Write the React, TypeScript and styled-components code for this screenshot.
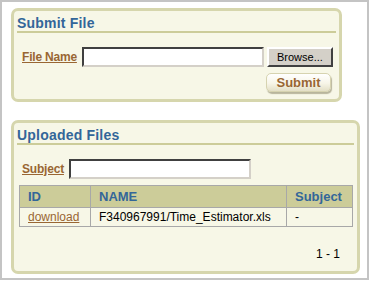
import React from "react";
import styled, { createGlobalStyle } from "styled-components";

const GlobalStyle = createGlobalStyle`
  html, body {
    margin: 0;
    padding: 0;
    background: #ffffff;
  }
  body {
    font-family: "Liberation Sans", Arial, sans-serif;
    font-size: 12px;
    color: #000000;
  }
`;

const Frame = styled.div`
  box-sizing: border-box;
  width: 369px;
  height: 280px;
  border: 2px solid #c4c4c4;
  background: #ffffff;
  padding: 6px 0 0 9px;
  display: flex;
  flex-direction: column;
  gap: 18px;
`;

const Region = styled.div<{ $width: number }>`
  box-sizing: border-box;
  width: ${({ $width }) => $width}px;
  border: 3px solid #d6d6ad;
  border-radius: 7px;
  background: #f7f7e7;
  padding-top: 4px;
  display: flex;
  flex-direction: column;
`;

const RegionTitle = styled.h2`
  margin: 0 3px;
  height: 16px;
  line-height: 16px;
  font-size: 14px;
  font-weight: bold;
  letter-spacing: 0.2px;
  color: #336699;
  border-bottom: 2px solid #cccc99;
`;

const FormBody = styled.div`
  padding: 14px 7px 7px 8px;
  display: flex;
  flex-direction: column;
  align-items: flex-end;
  gap: 6px;
`;

const FieldRow = styled.div`
  display: flex;
  align-items: center;
  align-self: stretch;
  height: 20px;
`;

const Label = styled.a`
  flex-shrink: 0;
  white-space: nowrap;
  font-weight: bold;
  font-size: 12px;
  letter-spacing: -0.2px;
  color: #996633;
  text-decoration: underline;
  margin-right: 5px;
  cursor: pointer;
`;

const TextInput = styled.input`
  box-sizing: border-box;
  flex-shrink: 0;
  width: 182px;
  height: 20px;
  margin: 0;
  padding: 1px 3px;
  border: 2px solid;
  border-color: #404040 #d4d0c8 #d4d0c8 #404040;
  background: #ffffff;
  font-family: "Liberation Sans", Arial, sans-serif;
  font-size: 12px;
`;

const BrowseButton = styled.button`
  box-sizing: border-box;
  flex-shrink: 0;
  width: 66px;
  height: 20px;
  margin-left: 3px;
  padding: 0;
  background: #d4d0c8;
  border: 2px solid;
  border-color: #ffffff #404040 #404040 #ffffff;
  font-family: "Liberation Sans", Arial, sans-serif;
  font-size: 11px;
  color: #000000;
`;

const SubmitButton = styled.button`
  box-sizing: border-box;
  width: 65px;
  height: 19px;
  margin-right: 1px;
  padding: 0;
  border: 1px solid #d6d3b0;
  border-radius: 5px;
  background: linear-gradient(#ffffff 0%, #f7f5e8 55%, #e3dfc6 100%);
  box-shadow: 1px 2px 1px #b8b59c;
  font-family: "Liberation Sans", Arial, sans-serif;
  font-size: 13px;
  font-weight: bold;
  color: #996633;
  line-height: 16px;
`;

const SearchRow = styled.div`
  display: flex;
  align-items: center;
  height: 20px;
  padding: 14px 0 0 8px;
`;

const Table = styled.table`
  margin: 6px 5px 0 5px;
  width: 333px;
  border-collapse: collapse;
  table-layout: fixed;
`;

const HeadCell = styled.th<{ $width: number }>`
  box-sizing: border-box;
  width: ${({ $width }) => $width}px;
  height: 22px;
  padding: 0 0 0 8px;
  text-align: left;
  background: #cccc99;
  border: 1px solid #a8a8a8;
  color: #336699;
  font-size: 13px;
  font-weight: bold;
`;

const Cell = styled.td`
  box-sizing: border-box;
  height: 19px;
  padding: 0 0 0 8px;
  border: 1px solid #a8a8a8;
  font-size: 12px;
  white-space: nowrap;
  overflow: hidden;
`;

const DownloadLink = styled.a`
  color: #996633;
  text-decoration: underline;
  cursor: pointer;
`;

const Pager = styled.div`
  align-self: flex-end;
  margin: 20px 17px 10px 0;
  font-size: 12px;
  line-height: 14px;
`;

const files = [
  { id: "download", name: "F340967991/Time_Estimator.xls", subject: "-" },
];

export default function App() {
  return (
    <>
      <GlobalStyle />
      <Frame>
        <Region $width={331}>
          <RegionTitle>Submit File</RegionTitle>
          <FormBody>
            <FieldRow>
              <Label>File Name</Label>
              <TextInput type="text" />
              <BrowseButton>Browse...</BrowseButton>
            </FieldRow>
            <SubmitButton>Submit</SubmitButton>
          </FormBody>
        </Region>
        <Region $width={349}>
          <RegionTitle>Uploaded Files</RegionTitle>
          <SearchRow>
            <Label>Subject</Label>
            <TextInput type="text" />
          </SearchRow>
          <Table>
            <thead>
              <tr>
                <HeadCell $width={71}>ID</HeadCell>
                <HeadCell $width={196}>NAME</HeadCell>
                <HeadCell $width={66}>Subject</HeadCell>
              </tr>
            </thead>
            <tbody>
              {files.map((f) => (
                <tr key={f.name}>
                  <Cell>
                    <DownloadLink>{f.id}</DownloadLink>
                  </Cell>
                  <Cell>{f.name}</Cell>
                  <Cell>{f.subject}</Cell>
                </tr>
              ))}
            </tbody>
          </Table>
          <Pager>1 - 1</Pager>
        </Region>
      </Frame>
    </>
  );
}
